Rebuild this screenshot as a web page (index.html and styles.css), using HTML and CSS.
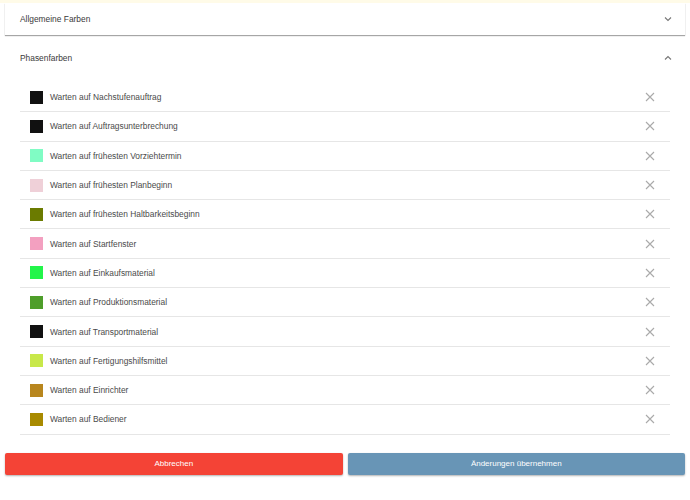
FILE: index.html
```html
<!DOCTYPE html>
<html>
<head>
<meta charset="utf-8">
<link rel="stylesheet" href="styles.css">
</head>
<body>
<div class="topstrip"></div>
<section class="panel collapsed">
  <div class="panel-header">
    <span>Allgemeine Farben</span>
    <svg class="chev" width="8" height="6" viewBox="0 0 8 6"><path d="M1 1.5 L4 4.5 L7 1.5" fill="none" stroke="#777" stroke-width="1.1"/></svg>
  </div>
</section>
<section class="panel open">
  <div class="panel-header">
    <span>Phasenfarben</span>
    <svg class="chev" width="8" height="6" viewBox="0 0 8 6"><path d="M1 4.5 L4 1.5 L7 4.5" fill="none" stroke="#777" stroke-width="1.1"/></svg>
  </div>
  <ul class="list">
    <li class="row"><span class="sw" style="background:#111"></span><span class="label">Warten auf Nachstufenauftrag</span><svg class="x" width="10" height="10" viewBox="0 0 10 10"><path d="M1 1 L9 9 M9 1 L1 9" stroke="#aaa" stroke-width="1.1"/></svg></li>
    <li class="row"><span class="sw" style="background:#111"></span><span class="label">Warten auf Auftragsunterbrechung</span><svg class="x" width="10" height="10" viewBox="0 0 10 10"><path d="M1 1 L9 9 M9 1 L1 9" stroke="#aaa" stroke-width="1.1"/></svg></li>
    <li class="row"><span class="sw" style="background:#80fcc4"></span><span class="label">Warten auf frühesten Vorziehtermin</span><svg class="x" width="10" height="10" viewBox="0 0 10 10"><path d="M1 1 L9 9 M9 1 L1 9" stroke="#aaa" stroke-width="1.1"/></svg></li>
    <li class="row"><span class="sw" style="background:#efd0d8"></span><span class="label">Warten auf frühesten Planbeginn</span><svg class="x" width="10" height="10" viewBox="0 0 10 10"><path d="M1 1 L9 9 M9 1 L1 9" stroke="#aaa" stroke-width="1.1"/></svg></li>
    <li class="row"><span class="sw" style="background:#6b7b00"></span><span class="label">Warten auf frühesten Haltbarkeitsbeginn</span><svg class="x" width="10" height="10" viewBox="0 0 10 10"><path d="M1 1 L9 9 M9 1 L1 9" stroke="#aaa" stroke-width="1.1"/></svg></li>
    <li class="row"><span class="sw" style="background:#f3a0c0"></span><span class="label">Warten auf Startfenster</span><svg class="x" width="10" height="10" viewBox="0 0 10 10"><path d="M1 1 L9 9 M9 1 L1 9" stroke="#aaa" stroke-width="1.1"/></svg></li>
    <li class="row"><span class="sw" style="background:#22f54a"></span><span class="label">Warten auf Einkaufsmaterial</span><svg class="x" width="10" height="10" viewBox="0 0 10 10"><path d="M1 1 L9 9 M9 1 L1 9" stroke="#aaa" stroke-width="1.1"/></svg></li>
    <li class="row"><span class="sw" style="background:#4e9e2a"></span><span class="label">Warten auf Produktionsmaterial</span><svg class="x" width="10" height="10" viewBox="0 0 10 10"><path d="M1 1 L9 9 M9 1 L1 9" stroke="#aaa" stroke-width="1.1"/></svg></li>
    <li class="row"><span class="sw" style="background:#111"></span><span class="label">Warten auf Transportmaterial</span><svg class="x" width="10" height="10" viewBox="0 0 10 10"><path d="M1 1 L9 9 M9 1 L1 9" stroke="#aaa" stroke-width="1.1"/></svg></li>
    <li class="row"><span class="sw" style="background:#c8e84a"></span><span class="label">Warten auf Fertigungshilfsmittel</span><svg class="x" width="10" height="10" viewBox="0 0 10 10"><path d="M1 1 L9 9 M9 1 L1 9" stroke="#aaa" stroke-width="1.1"/></svg></li>
    <li class="row"><span class="sw" style="background:#b8861e"></span><span class="label">Warten auf Einrichter</span><svg class="x" width="10" height="10" viewBox="0 0 10 10"><path d="M1 1 L9 9 M9 1 L1 9" stroke="#aaa" stroke-width="1.1"/></svg></li>
    <li class="row"><span class="sw" style="background:#a88a00"></span><span class="label">Warten auf Bediener</span><svg class="x" width="10" height="10" viewBox="0 0 10 10"><path d="M1 1 L9 9 M9 1 L1 9" stroke="#aaa" stroke-width="1.1"/></svg></li>
  </ul>
</section>
<div class="actions">
  <button class="btn cancel">Abbrechen</button>
  <button class="btn apply">Änderungen übernehmen</button>
</div>
</body>
</html>
```
FILE: styles.css
```css
html, body {
  margin: 0;
  padding: 0;
  background: #fff;
  font-family: "Liberation Sans", Arial, sans-serif;
  font-size: 8.4px;
  color: #3a3a3a;
}
.topstrip {
  height: 3px;
  background: #fffbe8;
}
.panel {
  margin: 0 5px;
  background: #fff;
}
.collapsed {
  box-shadow: 0 1px 1px rgba(0,0,0,0.35);
}
.open {
  margin-top: 5px;
}
.panel-header {
  display: flex;
  align-items: center;
  justify-content: space-between;
  padding: 0 13px 0 15px;
}
.collapsed .panel-header {
  height: 32px;
}
.open .panel-header {
  height: 36px;
}
.chev {
  display: block;
}
.list {
  list-style: none;
  margin: 0 15px;
  padding: 7px 0 0 0;
}
.row {
  display: flex;
  align-items: center;
  height: 28.3px;
  border-bottom: 1px solid #e6e6e6;
  padding: 0 15px 0 10px;
  color: #4a4a4a;
}
.sw {
  width: 13px;
  height: 13px;
  margin-right: 7px;
  flex: none;
}
.label {
  flex: 1;
}
.x {
  display: block;
}
.actions {
  display: flex;
  gap: 5px;
  padding: 18px 5px 5px 5px;
  height: 22px;
  box-shadow: 0 1px 0 #d8d8d8;
}
.btn {
  flex: 1;
  height: 22px;
  border: none;
  border-radius: 2px;
  color: #fff;
  font-family: "Liberation Sans", Arial, sans-serif;
  font-size: 8px;
  box-shadow: 0 1px 2px rgba(0,0,0,0.3);
}
.cancel {
  background: #f44336;
}
.apply {
  background: #6895b6;
}
```
